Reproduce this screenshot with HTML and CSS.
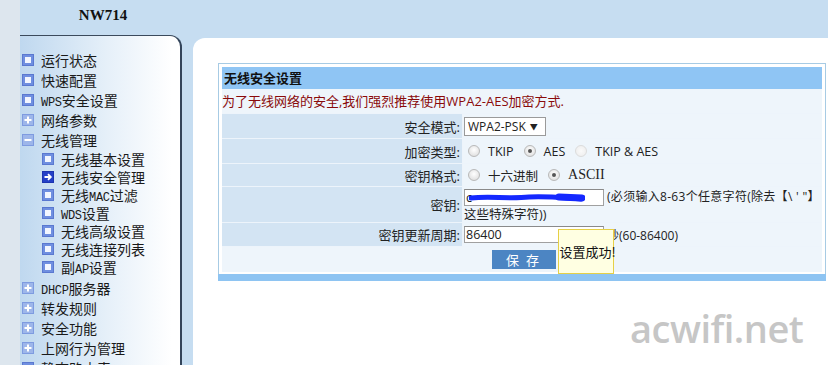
FILE: index.html
```html
<!DOCTYPE html>
<html>
<head>
<meta charset="utf-8">
<link rel="stylesheet" href="styles.css">
</head>
<body>
<div class="page">
  <div class="strip"></div>
  <div class="side">
    <div class="brand">NW714</div>
    <div class="nav">
      <div class="item"><svg class="ic" viewBox="0 0 12 12"><rect x="0.5" y="0.5" width="11" height="11" fill="#6f8fe0" stroke="#5a78d0"/><rect x="3" y="3" width="6" height="6" fill="#f2f6ff"/></svg><span class="tx">运行状态</span></div>
      <div class="item"><svg class="ic" viewBox="0 0 12 12"><rect x="0.5" y="0.5" width="11" height="11" fill="#6f8fe0" stroke="#5a78d0"/><rect x="3" y="3" width="6" height="6" fill="#f2f6ff"/></svg><span class="tx">快速配置</span></div>
      <div class="item"><svg class="ic" viewBox="0 0 12 12"><rect x="0.5" y="0.5" width="11" height="11" fill="#6f8fe0" stroke="#5a78d0"/><rect x="3" y="3" width="6" height="6" fill="#f2f6ff"/></svg><span class="tx"><span class="lat">WPS</span>安全设置</span></div>
      <div class="item"><svg class="ic" viewBox="0 0 12 12"><rect x="0.5" y="0.5" width="11" height="11" fill="#9db6ea" stroke="#7e9be0"/><rect x="2.5" y="5" width="7" height="2" fill="#fff"/><rect x="5" y="2.5" width="2" height="7" fill="#fff"/></svg><span class="tx">网络参数</span></div>
      <div class="item"><svg class="ic" viewBox="0 0 12 12"><rect x="0.5" y="0.5" width="11" height="11" fill="#9db6ea" stroke="#7e9be0"/><rect x="2.5" y="5" width="7" height="2" fill="#fff"/></svg><span class="tx">无线管理</span></div>
      <div class="sub">
        <div class="item si"><svg class="ic" viewBox="0 0 12 12"><rect x="0.5" y="0.5" width="11" height="11" fill="#6f8fe0" stroke="#5a78d0"/><rect x="3" y="3" width="6" height="6" fill="#f2f6ff"/></svg><span class="tx">无线基本设置</span></div>
        <div class="item si"><svg class="ic" viewBox="0 0 12 12"><rect x="0.5" y="0.5" width="11" height="11" fill="#2440c8" stroke="#1c34b0"/><path d="M2.5 6H8.5M6 3.2L8.8 6L6 8.8" stroke="#fff" stroke-width="1.8" fill="none"/></svg><span class="tx">无线安全管理</span></div>
        <div class="item si"><svg class="ic" viewBox="0 0 12 12"><rect x="0.5" y="0.5" width="11" height="11" fill="#6f8fe0" stroke="#5a78d0"/><rect x="3" y="3" width="6" height="6" fill="#f2f6ff"/></svg><span class="tx">无线<span class="lat">MAC</span>过滤</span></div>
        <div class="item si"><svg class="ic" viewBox="0 0 12 12"><rect x="0.5" y="0.5" width="11" height="11" fill="#6f8fe0" stroke="#5a78d0"/><rect x="3" y="3" width="6" height="6" fill="#f2f6ff"/></svg><span class="tx"><span class="lat">WDS</span>设置</span></div>
        <div class="item si"><svg class="ic" viewBox="0 0 12 12"><rect x="0.5" y="0.5" width="11" height="11" fill="#6f8fe0" stroke="#5a78d0"/><rect x="3" y="3" width="6" height="6" fill="#f2f6ff"/></svg><span class="tx">无线高级设置</span></div>
        <div class="item si"><svg class="ic" viewBox="0 0 12 12"><rect x="0.5" y="0.5" width="11" height="11" fill="#6f8fe0" stroke="#5a78d0"/><rect x="3" y="3" width="6" height="6" fill="#f2f6ff"/></svg><span class="tx">无线连接列表</span></div>
        <div class="item si"><svg class="ic" viewBox="0 0 12 12"><rect x="0.5" y="0.5" width="11" height="11" fill="#6f8fe0" stroke="#5a78d0"/><rect x="3" y="3" width="6" height="6" fill="#f2f6ff"/></svg><span class="tx">副<span class="lat">AP</span>设置</span></div>
      </div>
      <div class="item"><svg class="ic" viewBox="0 0 12 12"><rect x="0.5" y="0.5" width="11" height="11" fill="#9db6ea" stroke="#7e9be0"/><rect x="2.5" y="5" width="7" height="2" fill="#fff"/><rect x="5" y="2.5" width="2" height="7" fill="#fff"/></svg><span class="tx"><span class="lat">DHCP</span>服务器</span></div>
      <div class="item"><svg class="ic" viewBox="0 0 12 12"><rect x="0.5" y="0.5" width="11" height="11" fill="#9db6ea" stroke="#7e9be0"/><rect x="2.5" y="5" width="7" height="2" fill="#fff"/><rect x="5" y="2.5" width="2" height="7" fill="#fff"/></svg><span class="tx">转发规则</span></div>
      <div class="item"><svg class="ic" viewBox="0 0 12 12"><rect x="0.5" y="0.5" width="11" height="11" fill="#9db6ea" stroke="#7e9be0"/><rect x="2.5" y="5" width="7" height="2" fill="#fff"/><rect x="5" y="2.5" width="2" height="7" fill="#fff"/></svg><span class="tx">安全功能</span></div>
      <div class="item"><svg class="ic" viewBox="0 0 12 12"><rect x="0.5" y="0.5" width="11" height="11" fill="#9db6ea" stroke="#7e9be0"/><rect x="2.5" y="5" width="7" height="2" fill="#fff"/><rect x="5" y="2.5" width="2" height="7" fill="#fff"/></svg><span class="tx">上网行为管理</span></div>
      <div class="item"><svg class="ic" viewBox="0 0 12 12"><rect x="0.5" y="0.5" width="11" height="11" fill="#6f8fe0" stroke="#5a78d0"/><rect x="3" y="3" width="6" height="6" fill="#f2f6ff"/></svg><span class="tx">静态路由表</span></div>
    </div>
  </div>
  <div class="main">
    <div class="panel">
      <div class="box">
        <div class="grid">
          <div class="title">无线安全设置</div>
          <div class="notice">为了无线网络的安全,我们强烈推荐使用WPA2-AES加密方式.</div>
          <div class="lab r1">安全模式:</div>
          <div class="val r1"><span class="select">WPA2-PSK <span class="arr">▼</span></span></div>
          <div class="lab r2">加密类型:</div>
          <div class="val r2"><span class="radio"></span><span class="opt">TKIP</span><span class="radio on"></span><span class="opt">AES</span><span class="radio dis"></span><span class="opt">TKIP &amp; AES</span></div>
          <div class="lab r3">密钥格式:</div>
          <div class="val r3"><span class="radio"></span><span class="opt">十六进制</span><span class="radio on"></span><span class="opt ser">ASCII</span></div>
          <div class="lab r4">密钥:</div>
          <div class="val r4 keyval"><span class="input keyin">c<svg class="scrib" viewBox="0 0 116 10"><path d="M2 5C20 3 40 6 60 4C80 3 95 5 112 6" stroke="#1428ff" stroke-width="5" stroke-linecap="round" fill="none"/><path d="M90 4L113 5" stroke="#1428ff" stroke-width="7" stroke-linecap="round"/></svg></span><span class="hint">(必须输入8-63个任意字符(除去【\ ' "】</span><br><span class="hint2">这些特殊字符))</span></div>
          <div class="lab r5">密钥更新周期:</div>
          <div class="val r5"><span class="input">86400</span><span class="hint">秒(60-86400)</span></div>
          <div class="btnrow"><span class="btnwrap"><span class="btn">保 存</span><span class="tip">设置成功!</span></span></div>
        </div>
      </div>
      <div class="bar"></div>
    </div>
    <div class="wm">acwifi.net</div>
  </div>
</div>
</body>
</html>
```

FILE: styles.css
```css
html, body { margin: 0; padding: 0; }
body { width: 828px; height: 365px; overflow: hidden; background: #c6ddf1; }
.page { display: flex; height: 365px; overflow: hidden; background: #c6ddf1; }
.strip { width: 20px; flex: none; background: #dde6ee; }
.side { width: 162px; flex: none; display: flex; flex-direction: column; }
.brand { flex: none; height: 35px; font: bold 15px "Liberation Serif", serif; line-height: 31px; text-align: center; color: #111; padding-left: 4px; box-sizing: border-box; }
.nav { flex: 1; border-top: 1px solid #3b4a5c; border-right: 2px solid #33445a; border-top-right-radius: 12px; background: linear-gradient(to right, #bfd8ef 0%, #e6f0f9 55%, #ffffff 95%); padding-top: 14px; font: 14px "Noto Sans CJK SC", sans-serif; color: #1a1a1a; }
.item { height: 20px; display: flex; align-items: center; padding-left: 2px; white-space: nowrap; }
.item .ic { width: 12px; height: 12px; flex: none; margin-right: 7px; }
.tx { line-height: 20px; }
.sub { margin-bottom: 2px; }
.si { height: 18px; padding-left: 22px; }
.si .tx { line-height: 18px; }
.lat { font: 12px "Liberation Mono", monospace; letter-spacing: -0.3px; }
.main { flex: 1; position: relative; padding-left: 11px; padding-top: 38px; }
.panel { background: #fff; height: 100%; border-top-left-radius: 12px; padding-top: 25px; box-sizing: border-box; font: 13px "Open Sans", "Noto Sans CJK SC", sans-serif; color: #222; }
.box { margin: 0 2px 0 25px; border: 1px solid #a7cbe4; border-bottom: 0; padding: 3px 3px 2px 3px; }
.grid { display: grid; grid-template-columns: 240px 1fr; row-gap: 1px; column-gap: 1px; background: #edf4fb; }
.title { grid-column: 1 / 3; height: 22px; background: #8fc5f4; font-weight: bold; font-family: "Noto Sans CJK SC", sans-serif; line-height: 22px; padding-left: 2px; color: #111; }
.notice { grid-column: 1 / 3; height: 24px; line-height: 24px; background: #eef5fb; color: #8a0a0a; margin-top: -1px; }
.lab { background: #d3e4f3; text-align: right; padding-right: 2px; display: flex; align-items: center; justify-content: flex-end; }
.val { background: #eef5fb; display: flex; align-items: center; padding-left: 1px; }
.r1 { height: 24px; }
.r2 { height: 24px; }
.r3 { height: 22px; }
.r4 { height: 35px; }
.r5 { height: 23px; }
.select { display: inline-flex; align-items: center; height: 17px; width: 77px; border: 1px solid #9a9a9a; background: #fff; font-size: 12px; padding-left: 3px; }
.select .arr { font-size: 8px; margin-left: 4px; }
.radio { width: 12px; height: 12px; border-radius: 50%; border: 1px solid #b9b9b9; background: radial-gradient(circle at 50% 40%, #fff 0%, #e4e4e4 70%, #cfcfcf 100%); margin: 0 8px 0 4px; position: relative; box-sizing: border-box; flex: none; }
.radio.on::after { content: ""; position: absolute; left: 3px; top: 3px; width: 4px; height: 4px; border-radius: 50%; background: #555; }
.radio.dis { border-color: #dcdcdc; background: radial-gradient(circle, #fafafa, #ececec); }
.opt { margin-right: 6px; font-size: 12.5px; }
.opt.ser { font-family: "Liberation Serif", serif; font-size: 14px; }
.keyval { display: block; padding-top: 2px; line-height: 16px; box-sizing: border-box; }
.input { display: inline-flex; align-items: center; width: 140px; height: 17px; box-sizing: border-box; border: 1px solid #a0a0a0; border-top-color: #8a8a8a; background: #fff; padding-left: 1px; font-size: 12.5px; vertical-align: top; position: relative; }
.scrib { position: absolute; left: 4px; top: 3px; width: 116px; height: 10px; }
.hint { margin-left: 3px; font-size: 12px; white-space: nowrap; }
.keyval .hint { vertical-align: top; letter-spacing: 0.3px; }
.hint2 { font-size: 12.5px; }
.btnrow { grid-column: 1 / 3; height: 25px; background: #eef5fb; display: flex; justify-content: center; align-items: center; }
.btnwrap { position: relative; display: inline-block; margin-left: 3px; }
.btn { display: block; width: 64px; height: 19px; line-height: 19px; text-align: center; background: #4c85c3; color: #fff; font-size: 13px; letter-spacing: 2px; font-family: "Noto Sans CJK SC", sans-serif; }
.tip { position: absolute; left: 66px; top: -21px; width: 53px; height: 43px; background: #ffffe2; border: 1px solid #e6d046; font: 13px "Noto Sans CJK SC", sans-serif; color: #111; display: flex; align-items: center; padding-left: 1px; white-space: nowrap; box-sizing: content-box; }
.bar { margin: 0 2px 0 25px; height: 7px; background: #8ec4f2; }
.wm { position: absolute; left: 448px; top: 302px; font: 600 38px "Open Sans", sans-serif; color: #c6c6c6; letter-spacing: -0.5px; }
```
